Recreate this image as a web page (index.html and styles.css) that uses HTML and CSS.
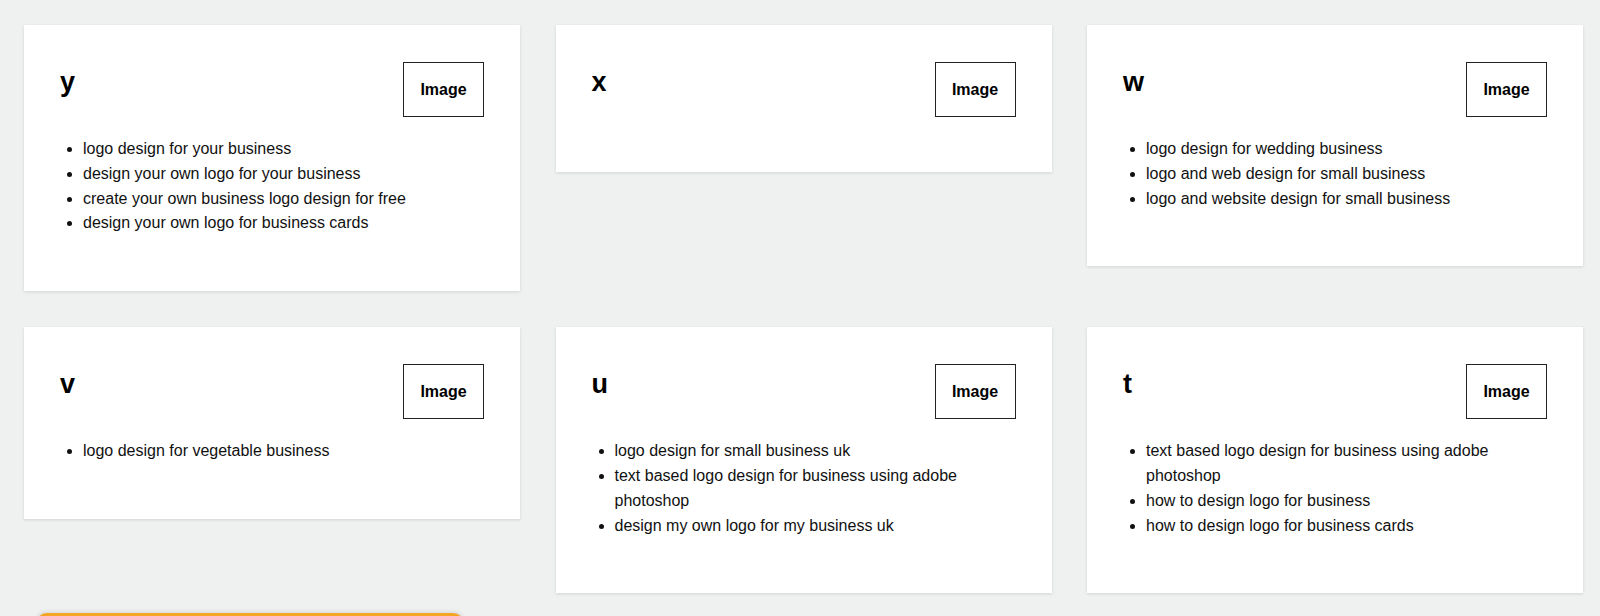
FILE: index.html
```html
<!DOCTYPE html>
<html lang="en">
<head>
<meta charset="utf-8">
<title>Logo design cards</title>
<link rel="stylesheet" href="styles.css">
</head>
<body>
<main class="page">
  <section class="grid">
    <article class="card">
      <header class="card-head">
        <h3 class="card-title">y</h3>
        <div class="thumb">Image</div>
      </header>
      <ul class="card-list">
        <li>logo design for your business</li>
        <li>design your own logo for your business</li>
        <li>create your own business logo design for free</li>
        <li>design your own logo for business cards</li>
      </ul>
    </article>
    <article class="card">
      <header class="card-head">
        <h3 class="card-title">x</h3>
        <div class="thumb">Image</div>
      </header>
    </article>
    <article class="card">
      <header class="card-head">
        <h3 class="card-title">w</h3>
        <div class="thumb">Image</div>
      </header>
      <ul class="card-list">
        <li>logo design for wedding business</li>
        <li>logo and web design for small business</li>
        <li>logo and website design for small business</li>
      </ul>
    </article>
    <article class="card">
      <header class="card-head">
        <h3 class="card-title">v</h3>
        <div class="thumb">Image</div>
      </header>
      <ul class="card-list">
        <li>logo design for vegetable business</li>
      </ul>
    </article>
    <article class="card">
      <header class="card-head">
        <h3 class="card-title">u</h3>
        <div class="thumb">Image</div>
      </header>
      <ul class="card-list">
        <li>logo design for small business uk</li>
        <li>text based logo design for business using adobe photoshop</li>
        <li>design my own logo for my business uk</li>
      </ul>
    </article>
    <article class="card">
      <header class="card-head">
        <h3 class="card-title">t</h3>
        <div class="thumb">Image</div>
      </header>
      <ul class="card-list">
        <li>text based logo design for business using adobe photoshop</li>
        <li>how to design logo for business</li>
        <li>how to design logo for business cards</li>
      </ul>
    </article>
  </section>
  <div class="cta-bar"></div>
</main>
</body>
</html>
```
FILE: styles.css
```css
html, body {
  margin: 0;
  padding: 0;
  background: #eff0f0;
}

body {
  font-family: "Liberation Sans", Arial, Helvetica, sans-serif;
  color: #111;
  overflow: hidden;
  height: 616px;
}

.page {
  padding: 25px 17px 0 24px;
}

.grid {
  display: grid;
  grid-template-columns: repeat(3, 1fr);
  column-gap: 35.5px;
  row-gap: 36px;
  align-items: start;
}

.card {
  background: #fff;
  box-shadow: 0 1px 3px rgba(0, 0, 0, 0.12);
  padding: 37px 36px 55px 36px;
}

.card-head {
  display: flex;
  justify-content: space-between;
  align-items: flex-start;
}

.card-title {
  margin: 0;
  font-size: 27px;
  line-height: 41px;
  font-weight: 700;
  color: #000;
}

.thumb {
  width: 79px;
  height: 53px;
  border: 1px solid #222;
  display: flex;
  align-items: center;
  justify-content: center;
  font-size: 16px;
  font-weight: 700;
  color: #000;
}

.card-list {
  margin: 20px 0 0 0;
  padding-left: 23px;
  font-size: 16px;
  line-height: 24.8px;
}

.cta-bar {
  margin: 20px 0 0 12px;
  width: 428px;
  height: 22px;
  border-radius: 11px;
  background: #f5a524;
  box-shadow: 0 -1px 4px rgba(0, 0, 0, 0.12);
}
```
